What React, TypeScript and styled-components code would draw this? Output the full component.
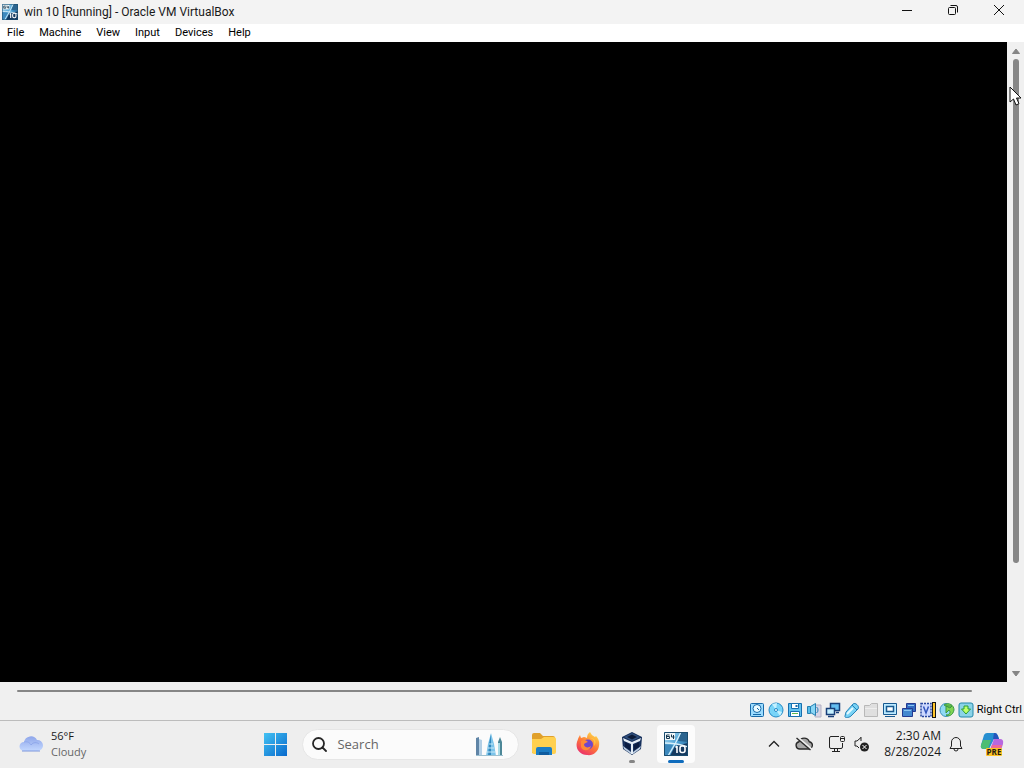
import React from "react";
import styled, { createGlobalStyle } from "styled-components";

const GlobalStyle = createGlobalStyle`
  * { box-sizing: border-box; }
  body {
    margin: 0;
    background: #f0f0f0;
    color: #1a1a1a;
    font-family: "Open Sans", "Noto Sans", sans-serif;
    font-size: 11px;
  }
  button, input { font: inherit; color: inherit; }
  button { border: 0; padding: 0; background: transparent; }
  svg { display: block; flex: none; }
`;

const Desktop = styled.div`
  position: relative;
  display: flex;
  flex-direction: column;
  min-height: 100vh;
`;

const TitleBar = styled.header`
  display: flex;
  align-items: center;
  height: 24px;
  padding-left: 2px;
  background: #f3f3f3;
`;

const Title = styled.h1`
  flex: 1;
  margin: 0 0 0 6px;
  font-family: Roboto, "Open Sans", sans-serif;
  font-size: 12px;
  line-height: 24px;
  font-weight: 400;
`;

const CaptionButton = styled.button`
  display: flex;
  align-items: center;
  justify-content: center;
  width: 46px;
  height: 24px;
  padding-bottom: 4px;
`;

const Captions = styled.div`
  display: flex;
  margin-right: 2px;
`;

const MenuBar = styled.nav`
  display: flex;
  gap: 15px;
  height: 18px;
  padding: 0 7px;
  background: #fff;
`;

const MenuButton = styled.button`
  color: #000;
  font-family: Roboto, "Open Sans", sans-serif;
  font-size: 11px;
  line-height: 18px;
`;

const Guest = styled.main`
  display: flex;
  flex: 1;
`;

const Screen = styled.section`
  flex: 1;
  background: #000;
`;

const VerticalBar = styled.div`
  display: flex;
  flex-direction: column;
  align-items: center;
  width: 17px;
  padding: 6px 0 5px;
`;

const ArrowButton = styled.button`
  display: flex;
`;

const VerticalTrack = styled.div`
  flex: 1;
  margin: 5px 0;
`;

const VerticalThumb = styled.div`
  width: 6px;
  height: 83%;
  border-radius: 3px;
  background: #868686;
`;

const HorizontalBar = styled.div`
  display: flex;
  height: 18px;
  padding: 8px 17px 0;
`;

const HorizontalThumb = styled.div`
  width: 96.5%;
  height: 2px;
  border-radius: 1px;
  background: #868686;
`;

const StatusBar = styled.footer`
  display: flex;
  align-items: center;
  justify-content: flex-end;
  gap: 3px;
  height: 21px;
  padding-right: 2px;
  border-bottom: 1px solid #bcbcbc;
`;

const HostKey = styled.span`
  color: #000;
  font-family: Roboto, "Open Sans", sans-serif;
  font-size: 11px;
  line-height: 20px;
`;

const Taskbar = styled.footer`
  display: flex;
  align-items: center;
  height: 47px;
  padding-bottom: 1px;
  background: #eeeeee;
`;

const Weather = styled.button`
  display: flex;
  flex: 264 1 0;
  align-items: center;
  gap: 7px;
  padding-left: 19px;
  text-align: left;
`;

const WeatherText = styled.span`
  display: flex;
  flex-direction: column;
  font-size: 11px;
  line-height: 16px;
`;

const Muted = styled.span`
  color: #666;
`;

const Pinned = styled.div`
  display: flex;
  align-items: center;
`;

const SearchBox = styled.label`
  display: flex;
  align-items: center;
  width: 217px;
  height: 31px;
  margin: 0 3px 0 14px;
  padding: 0 13px 0 9px;
  border-radius: 16px;
  border: 1px solid #e6e6e6;
  background: #fbfbfb;
`;

const SearchInput = styled.input`
  flex: 1;
  min-width: 0;
  margin-left: 10px;
  padding: 0;
  border: 0;
  outline: 0;
  background: transparent;
  font-size: 13px;
  &::placeholder { color: #666; opacity: 1; }
`;

const AppButton = styled.button<{ $active?: boolean; $running?: boolean }>`
  position: relative;
  display: flex;
  align-items: center;
  justify-content: center;
  width: 38px;
  height: 38px;
  margin: 0 3px;
  border-radius: 4px;
  background: ${(p) => (p.$active ? "#fcfcfc" : "transparent")};
  &::after {
    content: "";
    position: absolute;
    bottom: 0;
    width: ${(p) => (p.$active ? "16px" : "6px")};
    height: 3px;
    border-radius: 2px;
    background: ${(p) => (p.$active ? "#0f6cbd" : p.$running ? "#858585" : "transparent")};
  }
`;

const Tray = styled.div`
  display: flex;
  flex: 330 1 0;
  align-items: center;
  justify-content: flex-end;
  padding-right: 20px;
`;

const TrayIcons = styled.div`
  display: flex;
  align-items: center;
  gap: 15px;
  margin-right: 8px;
`;

const TrayButton = styled.button`
  display: flex;
`;

const Clock = styled.button`
  display: flex;
  flex-direction: column;
  align-items: flex-end;
  margin: 0 8px 0 14px;
  font-size: 12px;
  line-height: 16px;
`;

const Copilot = styled.button`
  display: flex;
  margin-left: 17px;
`;

const Pointer = styled.svg`
  position: absolute;
  top: 86px;
  right: 2px;
`;

function MachineIcon({ size }: { size: number }) {
  return (
    <svg width={size} height={size} viewBox="0 0 24 24" aria-hidden="true">
      <defs>
        <linearGradient id="machine" x1="0" y1="0" x2="1" y2="1">
          <stop offset="0" stopColor="#b5e0f4" />
          <stop offset=".5" stopColor="#4aa0d4" />
          <stop offset="1" stopColor="#1a4f80" />
        </linearGradient>
      </defs>
      <path d="M0 0h24v24H0z" fill="url(#machine)" />
      <path d="M17 0h7v10l-10-1z" fill="#2b648f" />
      <path d="M0 12l9 1-6 11H0z" fill="#3d89bd" />
      <path d="M11 14l13-3v13H6z" fill="#153a60" />
      <path d="M17 0l-6 12L4 24M0 11c7 0 16 1 24 4" stroke="#d7effa" strokeWidth="1.300" fill="none" />
      <path d="M1 1h10v7H1z" fill="#f0f6f8" />
      <path d="M5.500 3h-3v3.500h3V4.500h-3M7.500 2.500v2.500h3M9.500 3v4" stroke="#163851" fill="none" />
      <path d="M13 14v7M11.500 15.500L13 14" stroke="#fff" strokeWidth="1.600" fill="none" />
      <rect x="16" y="14" width="5" height="6.500" rx="2" stroke="#fff" strokeWidth="1.600" fill="none" />
      <path d="M.5 .5h23v23H.5z" fill="none" stroke="#194b6e" />
    </svg>
  );
}

const deviceIcons: { name: string; art: React.ReactNode }[] = [
  {
    name: "Hard disks",
    art: (
      <g stroke="#1769a8">
        <rect x="1.500" y="1.500" width="13" height="13" rx="1" fill="#9bdcff" />
        <circle cx="8" cy="6.500" r="4" fill="#e9faff" />
        <path d="M8 6l2 2" />
        <path d="M4 12.500h8" />
      </g>
    ),
  },
  {
    name: "Optical drives",
    art: (
      <g stroke="#2389c6">
        <circle cx="8" cy="8" r="7" fill="#78d4f8" />
        <path d="M8 8L4 2l5-1zM8 8l4 6 2-4z" fill="#c6f1ff" stroke="none" />
        <circle cx="8" cy="8" r="1.500" fill="#fff" />
      </g>
    ),
  },
  {
    name: "Floppy drives",
    art: (
      <g stroke="#176fae">
        <path d="M1.500 1.500h13v13h-13z" fill="#62c1ef" />
        <path d="M4.500 1.500h7v5h-7zM3.500 9.500h9v5h-9z" fill="#fff" />
        <path d="M5 11.500h6" stroke="#60b84e" />
        <path d="M9.500 3v2" strokeWidth="2" />
      </g>
    ),
  },
  {
    name: "Audio",
    art: (
      <g>
        <path d="M9 3h6v12H9z" fill="#d8d5e6" stroke="#b3b1c3" />
        <path d="M1.500 4.500h3v7h-3z" fill="#58bce8" stroke="#2580b2" />
        <path d="M4.500 4.500l5-3v12l-5-3z" fill="#8ad6f5" stroke="#2580b2" />
        <path d="M10.500 5c2 1 2 5 0 6" fill="none" stroke="#2580b2" />
      </g>
    ),
  },
  {
    name: "Network",
    art: (
      <g stroke="#173f79">
        <path d="M5.500 1.500h9v7h-9z" fill="#63bdf0" strokeWidth="1.500" />
        <path d="M1.500 6.500h8v6h-8z" fill="#c4efff" strokeWidth="1.500" />
        <path d="M3 14.500h6M11 10.500h3" strokeWidth="1.500" />
      </g>
    ),
  },
  {
    name: "USB",
    art: (
      <g stroke="#2682b7">
        <path d="M2 10l7-8c2-2 7 2 5 5l-7 7c-2 2-7 2-6 0z" fill="#78d2f5" />
        <path d="M3 12l6-6" stroke="#e4faff" strokeWidth="2" />
        <path d="M8 3l5 5" />
      </g>
    ),
  },
  {
    name: "Shared folders",
    art: (
      <g fill="#dfdfdf" stroke="#b8b8b8">
        <path d="M1.500 3.500h5l2-2h6v13h-13z" />
        <path d="M2 6.500h12" stroke="#eee" />
      </g>
    ),
  },
  {
    name: "Display",
    art: (
      <g stroke="#175990">
        <path d="M1.500 1.500h13v11h-13z" fill="#bceaff" />
        <path d="M4.500 4.500h7v5h-7z" fill="#fff" strokeWidth="1.500" />
        <path d="M3 14.500h10" />
      </g>
    ),
  },
  {
    name: "Recording",
    art: (
      <g stroke="#243a91">
        <path d="M5.500 1.500h9v8h-9z" fill="#326bc0" />
        <path d="M1.500 6.500h10v8h-10z" fill="#4388cf" />
        <path d="M7 3.500h6M3 8.500h7" stroke="#8bc5f2" />
      </g>
    ),
  },
  {
    name: "Processor",
    art: (
      <g>
        <path d="M1 1.500h10v13H1z" fill="#ccd8ff" stroke="#2746a0" strokeWidth="1.500" strokeDasharray="2 1" />
        <path d="M3.500 4.500L6 11l2.500-6.500" fill="none" stroke="#3155bd" strokeWidth="1.500" />
        <path d="M12 0h4v16h-4z" fill="#151515" />
        <path d="M13 1h2v14h-2z" fill="#ffc52b" />
      </g>
    ),
  },
  {
    name: "Mouse integration",
    art: (
      <g>
        <ellipse cx="7" cy="8" rx="6" ry="6.500" fill="#8fd9f4" stroke="#3a91b9" />
        <path d="M5 3c5-3 10 0 10 5-1 5-5 7-8 5 4 0 5-3 3-5l-3 3V4h6l-2 2z" fill="#80d454" stroke="#389740" />
      </g>
    ),
  },
  {
    name: "Keyboard",
    art: (
      <g>
        <rect x="1" y="1" width="14" height="14" rx="2" fill="#8bd3e8" stroke="#2587aa" />
        <path d="M6 4h4v3h2.500L8 12 3.500 7H6z" fill="#bfff68" stroke="#2b9c36" />
      </g>
    ),
  },
];

const menus = ["File", "Machine", "View", "Input", "Devices", "Help"];

export default function App() {
  return (
    <Desktop>
      <GlobalStyle />
      <TitleBar>
        <MachineIcon size={16} />
        <Title>win 10 [Running] - Oracle VM VirtualBox</Title>
        <Captions>
          <CaptionButton aria-label="Minimize">
            <svg width="12" height="12" viewBox="0 0 12 12"><path d="M1 6.500h10" stroke="#111" /></svg>
          </CaptionButton>
          <CaptionButton aria-label="Restore">
            <svg width="12" height="12" viewBox="0 0 12 12" fill="none" stroke="#111">
              <rect x="1.500" y="3.500" width="7" height="7" rx="1" />
              <path d="M3.500 1.500H9a1.500 1.500 0 0 1 1.500 1.500v5.500" />
            </svg>
          </CaptionButton>
          <CaptionButton aria-label="Close">
            <svg width="12" height="12" viewBox="0 0 12 12"><path d="M1 1l10 10M11 1L1 11" stroke="#111" /></svg>
          </CaptionButton>
        </Captions>
      </TitleBar>
      <MenuBar>
        {menus.map((m) => <MenuButton key={m}>{m}</MenuButton>)}
      </MenuBar>
      <Guest>
        <Screen aria-label="Guest display" />
        <VerticalBar>
          <ArrowButton aria-label="Scroll up">
            <svg width="10" height="6" viewBox="0 0 10 6"><path d="M5 1l3.500 4.500h-7z" fill="#858585" stroke="#858585" strokeLinejoin="round" /></svg>
          </ArrowButton>
          <VerticalTrack><VerticalThumb /></VerticalTrack>
          <ArrowButton aria-label="Scroll down">
            <svg width="10" height="6" viewBox="0 0 10 6"><path d="M5 5L1.500 .5h7z" fill="#858585" stroke="#858585" strokeLinejoin="round" /></svg>
          </ArrowButton>
        </VerticalBar>
      </Guest>
      <HorizontalBar><HorizontalThumb /></HorizontalBar>
      <StatusBar>
        {deviceIcons.map((d) => (
          <svg key={d.name} width="16" height="16" viewBox="0 0 16 16" role="img" aria-label={d.name}>{d.art}</svg>
        ))}
        <HostKey>Right Ctrl</HostKey>
      </StatusBar>
      <Taskbar>
        <Weather>
          <svg width="25" height="18" viewBox="0 0 25 18">
            <defs>
              <linearGradient id="cloud" x1="0" y1="0" x2="0" y2="1">
                <stop offset="0" stopColor="#8fa6ea" />
                <stop offset="1" stopColor="#c3d8ff" />
              </linearGradient>
            </defs>
            <path d="M5 16a4.500 4.500 0 0 1 0-9A7 7 0 0 1 18 5a5.500 5.500 0 0 1 1 11z" fill="url(#cloud)" />
            <path d="M5 7c4-1 6 1 7 3 2-3 6-3 8-1" fill="none" stroke="#8fa8ec" />
            <path d="M3 16h18" stroke="#7d96dc" />
          </svg>
          <WeatherText><span>56°F</span><Muted>Cloudy</Muted></WeatherText>
        </Weather>
        <Pinned>
          <TrayButton aria-label="Start">
            <svg width="25" height="24" viewBox="0 0 25 24">
              <defs>
                <linearGradient id="start" x1="0" y1="0" x2="1" y2="1">
                  <stop offset="0" stopColor="#43c2f3" />
                  <stop offset="1" stopColor="#0869cc" />
                </linearGradient>
              </defs>
              <path d="M1 1h11v11H1zM13 1h11v11H13zM1 13h11v11H1zM13 13h11v11H13z" fill="url(#start)" />
            </svg>
          </TrayButton>
          <SearchBox>
            <svg width="15" height="15" viewBox="0 0 15 15" fill="none" stroke="#252525" strokeWidth="1.800" strokeLinecap="round">
              <circle cx="6.500" cy="6.500" r="5.500" /><path d="M10.500 10.500L14 14" />
            </svg>
            <SearchInput type="text" placeholder="Search" aria-label="Search" />
            <svg width="30" height="25" viewBox="0 0 30 25">
              <path d="M1 6l3-1v19H1z" fill="#5f84a6" /><path d="M4 7l3 1v16H4z" fill="#b3cfe5" />
              <path d="M11 24l2-12 3-11 3 11 2 12z" fill="#7cc4ea" /><path d="M16 2v22h-3l1-12z" fill="#3288bd" />
              <path d="M14 12h4M13 16h6M12 20h8" stroke="#c7e9f8" />
              <path d="M23 10l2-5 2 5v14h-4z" fill="#4c8797" /><path d="M23 11h2v13h-2z" fill="#a8dbe6" />
              <path d="M1 23.500h27" stroke="#9cc0d0" />
            </svg>
          </SearchBox>
          <AppButton aria-label="File Explorer">
            <svg width="26" height="24" viewBox="0 0 26 24">
              <path d="M1 3q0-2 2-2h6l3 3h10q2 0 2 2v15H1z" fill="#e0a02b" />
              <path d="M1 7h9l3-2h9q3 0 3 2v13q0 2-2 2H3q-2 0-2-2z" fill="#ffd04f" />
              <path d="M5 23v-6q0-2 2-2h12q2 0 2 2v6z" fill="#1b7cc4" />
              <path d="M8 20h10v3H8z" fill="#0f5c9f" />
            </svg>
          </AppButton>
          <AppButton aria-label="Firefox">
            <svg width="24" height="24" viewBox="0 0 24 24">
              <defs>
                <linearGradient id="fox" x1=".8" y1="0" x2=".2" y2="1">
                  <stop offset="0" stopColor="#ffe14b" />
                  <stop offset=".5" stopColor="#ff7a35" />
                  <stop offset="1" stopColor="#e92970" />
                </linearGradient>
              </defs>
              <path d="M14 0q1 3 5 5l1-1q4 4 3 10c-1 6-6 10-12 9C4 23-1 17 1 10Q2 6 4 3l1 3 3-1c2 0 2 1 3 1q0-4 3-6z" fill="url(#fox)" />
              <circle cx="12" cy="12.500" r="5" fill="#6f47cc" />
              <path d="M5 9c3-2 5-1 7 1-2 1-4 1-4 3 1 3 5 3 7 1-1 5-8 6-10 1z" fill="#ff8a35" />
              <path d="M13 6c5 0 6 4 5 8 4-4 0-9-5-8z" fill="#ffc644" />
            </svg>
          </AppButton>
          <AppButton $running aria-label="Oracle VM VirtualBox">
            <svg width="22" height="24" viewBox="0 0 22 24">
              <path d="M11 0l10 5-1 12-9 6-9-6L1 5z" fill="#16305c" />
              <path d="M11 1l8 4-8 4-8-4z" fill="#31507d" />
              <path d="M11 2.500l5 2.500-5 2.500L6 5z" fill="#0c1b38" />
              <path d="M2 6l9 4 9-4-1 3-7 3v10h-2V12L3 9z" fill="#e4edf6" />
              <path d="M2 14l8 6v2l-7-5zM20 14l-8 6v2l7-5z" fill="#bccde1" />
              <path d="M4 10l5 3v5l-5-3zM18 10l-5 3v5l5-3z" fill="#0b1d42" />
            </svg>
          </AppButton>
          <AppButton $active aria-label="win 10"><MachineIcon size={24} /></AppButton>
        </Pinned>
        <Tray>
          <TrayIcons>
            <TrayButton aria-label="Show hidden icons">
              <svg width="12" height="16" viewBox="0 0 12 16"><path d="M1 10.500l5-5 5 5" fill="none" stroke="#222" strokeWidth="1.300" /></svg>
            </TrayButton>
            <TrayButton aria-label="OneDrive">
              <svg width="18" height="18" viewBox="0 0 18 18">
                <path d="M5 14a3.700 3.700 0 0 1-1-7.300 5.500 5.500 0 0 1 10.300 0A3.700 3.700 0 0 1 13 14z" fill="#a8a8a8" stroke="#292929" strokeWidth="1.400" />
                <path d="M2.500 2.500l14 12" stroke="#eee" strokeWidth="2.500" /><path d="M1.500 3l14 12" stroke="#292929" strokeWidth="1.400" />
              </svg>
            </TrayButton>
            <TrayButton aria-label="Network">
              <svg width="18" height="18" viewBox="0 0 18 18" fill="none" stroke="#222">
                <path d="M11 1.500H3a1.500 1.500 0 0 0-1.500 1.500v9A1.500 1.500 0 0 0 3 13.500h10a1.500 1.500 0 0 0 1.500-1.500V8M6.500 14v2.500M9.500 14v2.500M4 16.500h8" />
                <rect x="12.500" y="1.500" width="4" height="5" rx="1" />
                <path d="M12.500 3.500h4" />
              </svg>
            </TrayButton>
          </TrayIcons>
          <TrayButton aria-label="Volume">
            <svg width="16" height="18" viewBox="0 0 16 18">
              <path d="M7 2v4M5 13l-2-2H1V6h2l4-3.500" fill="none" stroke="#222" />
              <circle cx="10.500" cy="12" r="4.500" fill="#222" />
              <path d="M8.500 10l4 4M12.500 10l-4 4" stroke="#fff" />
            </svg>
          </TrayButton>
          <Clock><span>2:30 AM</span><span>8/28/2024</span></Clock>
          <TrayButton aria-label="Notifications">
            <svg width="14" height="16" viewBox="0 0 14 16" fill="none" stroke="#222">
              <path d="M2.500 10V6a4.500 4.500 0 0 1 9 0v4l1.500 2.500H1zM5 13a2 2 0 0 0 4 0" strokeLinejoin="round" />
            </svg>
          </TrayButton>
          <Copilot aria-label="Copilot preview">
            <svg width="24" height="25" viewBox="0 0 24 25">
              <path d="M7 1h8q2 0 3 3l1 3h-5L9 17H4q-4 0-3-4L4 3q1-2 3-2z" fill="#268fd0" />
              <path d="M3 8h8L8 17H4q-4 0-3-4z" fill="#4dbd72" />
              <path d="M14 1h1q2 0 3 3l1 3h-6z" fill="#2455bd" />
              <path d="M14 7h6q4 0 3 5l-3 9q-1 2-4 2H8z" fill="#b768df" />
              <path d="M12 13h10l-2 8q-1 2-4 2H8z" fill="#ee6a9a" />
              <rect x="6" y="16" width="16" height="8" rx="1" fill="#ffc426" />
              <text x="14" y="23" textAnchor="middle" fontSize="8" fontWeight="700" fontFamily="Open Sans, sans-serif" fill="#231b12">PRE</text>
            </svg>
          </Copilot>
        </Tray>
      </Taskbar>
      <Pointer width="13" height="20" viewBox="0 0 13 20" aria-hidden="true">
        <path d="M1 1v15l3.500-3 2.500 6 3-1.300-2.500-5.700H12z" fill="#fff" stroke="#111" />
      </Pointer>
    </Desktop>
  );
}
